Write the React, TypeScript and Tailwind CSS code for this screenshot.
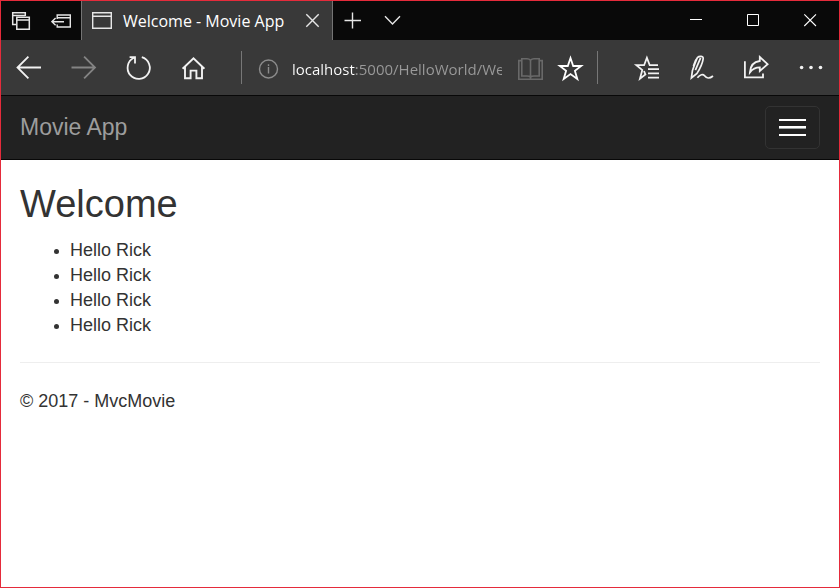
import type { ReactNode } from "react";

const uiFont = "font-['Segoe_UI','Open_Sans',sans-serif]";
const pageFont = "font-['Liberation_Sans',Arial,sans-serif]";

function IconButton({ label, className, children }: { label: string; className: string; children: ReactNode }) {
  return (
    <button type="button" aria-label={label} className={`flex h-full shrink-0 items-center justify-center ${className}`}>
      {children}
    </button>
  );
}

function Icon({ size, width = 2, children }: { size: 20 | 28; width?: number; children: ReactNode }) {
  return (
    <svg
      width={size}
      height={size}
      viewBox={`0 0 ${size} ${size}`}
      fill="none"
      stroke="currentColor"
      strokeWidth={width}
      aria-hidden="true"
      className="shrink-0"
    >
      {children}
    </svg>
  );
}

function TabStrip() {
  return (
    <div className="flex h-[39px] bg-[#090909] text-[#e6e6e6]">
      <IconButton label="Tabs you've set aside" className="w-10">
        <Icon size={20} width={1.5}>
          <path d="M5 13.5H1.7V1.7H14.3V5M1.7 4.4H14" />
          <path d="M5.8 6.2H18.3V18.3H5.8ZM5.8 9H18.3" />
        </Icon>
      </IconButton>
      <IconButton label="Set these tabs aside" className="w-10">
        <Icon size={20} width={1.4}>
          <path d="M6.2 8V4H19.3V16H6.2V13.4M6.2 6.8H19.3" />
          <path d="M13 10.7H0.8M4.6 7.1L0.9 10.7L4.6 14.3" />
        </Icon>
      </IconButton>
      <div className="flex w-[252px] items-center border-x border-[#747474] bg-[#393939] pl-2.5">
        <Icon size={20} width={1.4}>
          <path d="M0.7 1.7H19.3V17.3H0.7ZM0.7 5.3H19.3" />
        </Icon>
        <span className={`ml-[11px] flex-1 text-base leading-5 whitespace-nowrap text-white ${uiFont}`}>Welcome - Movie App</span>
        <IconButton label="Close tab" className="w-10">
          <Icon size={20} width={1.4}>
            <path d="M4.3 3.3L16.7 15.7M16.7 3.3L4.3 15.7" />
          </Icon>
        </IconButton>
      </div>
      <IconButton label="New tab" className="w-10">
        <Icon size={20} width={1.4}>
          <path d="M1.5 9.5H18M9.5 1.5V17.5" />
        </Icon>
      </IconButton>
      <IconButton label="Tab previews" className="w-10">
        <Icon size={20} width={1.4}>
          <path d="M2 5.3L9.5 12.9L17 5.3" />
        </Icon>
      </IconButton>
      <div className="flex-1" />
      <IconButton label="Minimize" className="w-[57px] text-white">
        <Icon size={20} width={1}>
          <path d="M3 8.5H15" />
        </Icon>
      </IconButton>
      <IconButton label="Maximize" className="w-[57px] text-white">
        <Icon size={20} width={1}>
          <path d="M3.5 3.5H14.5V14.5H3.5Z" />
        </Icon>
      </IconButton>
      <IconButton label="Close" className="w-[57px] text-white">
        <Icon size={20} width={1.1}>
          <path d="M3.3 3.3L15 15M15 3.3L3.3 15" />
        </Icon>
      </IconButton>
    </div>
  );
}

function AddressBar() {
  return (
    <div className="mr-[21px] ml-5 flex h-[33px] min-w-0 flex-1 items-center border-x border-[#777777] pl-3 text-[#8c8c8c]">
      <Icon size={28} width={1.4}>
        <circle cx="14.5" cy="15" r="9" />
        <path d="M14.5 13V19.5M14.5 10.3V12" />
      </Icon>
      <input
        type="text"
        aria-label="Address"
        defaultValue="localhost:5000/HelloWorld/Welcome"
        className={`ml-2.5 h-[26px] w-0 min-w-0 flex-1 bg-[linear-gradient(to_right,#ffffff_64px,#9a9a9a_64px)] bg-clip-text pt-0.5 text-[15px] leading-6 text-transparent outline-none ${uiFont}`}
      />
      <IconButton label="Reading view" className="ml-3.5 w-7 text-[#696969]">
        <Icon size={28} width={1.6}>
          <path d="M14.5 6.2C13.6 5.2 12.5 4.8 11 4.8H5.8V22H11C12.5 22 13.6 22.2 14.5 23.2C15.4 22.2 16.5 22 18 22H23.2V4.8H18C16.5 4.8 15.4 5.2 14.5 6.2ZM14.5 6.2V25" />
          <path d="M5.8 6.6H2.8V25.2H26.2V6.6H23.2" />
        </Icon>
      </IconButton>
      <IconButton label="Add to favorites" className="mr-[13px] ml-3 w-7 text-white">
        <Icon size={28} width={1.8}>
          <path d="M14.5 4L17.2 12H25.2L18.9 16.8L21.3 25L14.5 20L7.7 25L10.1 16.8L3.8 12H11.8Z" />
        </Icon>
      </IconButton>
    </div>
  );
}

function Toolbar() {
  return (
    <div className="flex h-[55px] items-center bg-[#393939] text-[#f2f2f2]">
      <IconButton label="Back" className="w-[55px]">
        <Icon size={28} width={1.8}>
          <path d="M26 13.5H3M13.4 2.6L2.5 13.5L13.4 24.4" />
        </Icon>
      </IconButton>
      <IconButton label="Forward" className="w-[55px] text-[#848484]">
        <Icon size={28} width={1.8}>
          <path d="M1.5 13.5H24.5M14.1 2.6L25 13.5L14.1 24.4" />
        </Icon>
      </IconButton>
      <IconButton label="Refresh" className="w-[55px]">
        <Icon size={28} width={1.8}>
          <path d="M16.8 3.2A11.1 11.1 0 1 1 9 3.8M4.6 3.2H10V9.4" />
        </Icon>
      </IconButton>
      <IconButton label="Home" className="w-[55px]">
        <Icon size={28} width={1.9}>
          <path d="M2.6 14.7L13.5 4.2L24.4 14.7M5 12.6V24.2H10.6V16.6H16.4V24.2H22V12.6" />
        </Icon>
      </IconButton>
      <AddressBar />
      <IconButton label="Hub" className="w-[55px]">
        <Icon size={28} width={1.8}>
          <path d="M25 11.2H16.7L13.9 3.8L11.1 11.2H3.4L9.3 16L7 24.6L12.4 20.4L11 17M15 15.2H26M15 19.4H26M15 23.6H26" />
        </Icon>
      </IconButton>
      <IconButton label="Add notes" className="w-[55px]">
        <Icon size={28} width={1.7}>
          <path d="M9.4 3.6C11 2 15.4 1.6 15.2 4.6C14.8 7.6 12 14.6 9 19.4L3.4 24L4.4 16.8C6 12 7.6 7.4 9.4 3.6ZM12.6 3.8L7.4 16.2M9 4.4C7.4 5.8 6.4 9.6 5.4 12" />
          <path d="M9.4 23.8C12 20.4 15 19.8 16.6 21.8C18.4 24.4 21.4 25 25 22" />
        </Icon>
      </IconButton>
      <IconButton label="Share" className="w-[55px]">
        <Icon size={28} width={1.8}>
          <path d="M1.9 7.2V23.4H20V19.6M16.8 3L24.6 10.2L16.8 17V13.4C12.3 13.4 9.5 15 6.9 18.4C7.3 12 10.7 7.8 16.8 7V3Z" />
        </Icon>
      </IconButton>
      <IconButton label="Settings and more" className="w-[55px]">
        <svg width="28" height="28" viewBox="0 0 28 28" fill="currentColor" aria-hidden="true">
          <circle cx="3.6" cy="13.5" r="1.8" />
          <circle cx="13" cy="13.5" r="1.8" />
          <circle cx="22.5" cy="13.5" r="1.8" />
        </svg>
      </IconButton>
    </div>
  );
}

export default function App() {
  return (
    <div className="flex min-h-screen flex-col border border-[#e52b3b] bg-white">
      <header>
        <TabStrip />
        <Toolbar />
      </header>
      <div className={`flex-1 text-lg leading-[25px] text-[#333333] ${pageFont}`}>
        <nav className="flex h-[65px] items-center justify-between border-y border-[#080808] bg-[#222222] px-[19px]">
          <a href="#" className="text-[23px] leading-[25px] text-[#9d9d9d]">
            Movie App
          </a>
          <button
            type="button"
            aria-label="Toggle navigation"
            className="flex h-[43px] w-[55px] flex-col items-center justify-center gap-[5px] rounded-[5px] border border-[#333333]"
          >
            <span className="h-0.5 w-[27px] bg-white" />
            <span className="h-[3px] w-[27px] border-b border-[#a0a6a6] bg-white" />
            <span className="h-0.5 w-[27px] bg-white" />
          </button>
        </nav>
        <main className="px-[19px] pt-6">
          <h1 className="text-[38px] leading-10">Welcome</h1>
          <ul className="mt-3.5 list-disc pl-[50px] marker:text-base">
            <li>Hello Rick</li>
            <li>Hello Rick</li>
            <li>Hello Rick</li>
            <li>Hello Rick</li>
          </ul>
          <hr className="mt-6 border-[#eeeeee]" />
          <footer className="mt-[26px]">
            <p>© 2017 - MvcMovie</p>
          </footer>
        </main>
      </div>
    </div>
  );
}
